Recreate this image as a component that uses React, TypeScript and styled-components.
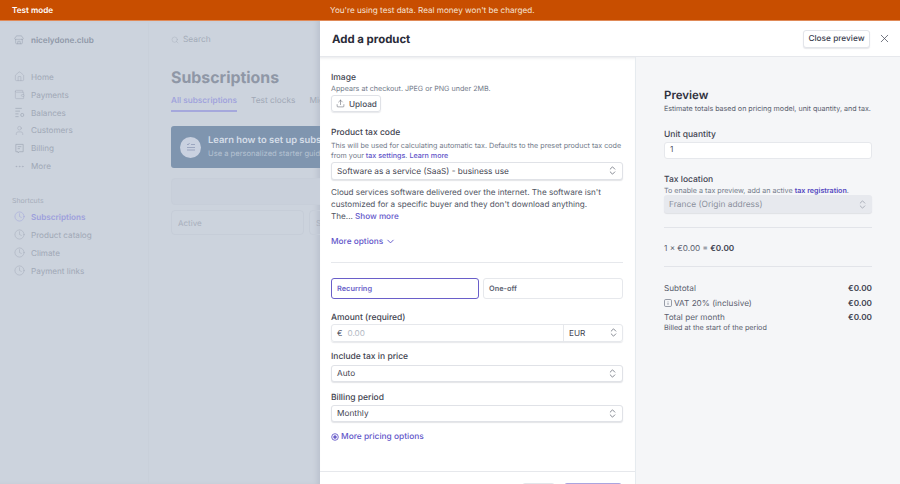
import React from "react";
import styled, { createGlobalStyle } from "styled-components";
import {
  ChevronDown,
  ChevronsUpDown,
  Clock,
  Ellipsis,
  Home,
  Search,
  Store,
  Upload,
  User,
  Wallet,
  X,
} from "lucide-react";

const Global = createGlobalStyle`
  html, body { margin: 0; padding: 0; height: 484px; overflow: hidden; }
  body { font-family: Inter, "Liberation Sans", sans-serif; background: #ccd3dd; color: #30313d; text-rendering: geometricPrecision; }
  #root { height: 484px; }
  * { box-sizing: border-box; }
`;

const Page = styled.div`
  display: flex;
  flex-direction: column;
  width: 900px;
  height: 484px;
  overflow: hidden;
`;

const TestBanner = styled.div`
  display: grid;
  grid-template-columns: 330px 1fr;
  align-items: center;
  height: 21px;
  flex: none;
  padding-left: 12px;
  background: #c84e00;
  border-bottom: 1px solid #e08a58;
  color: #f6e3d6;
  font-size: 8.15px;
`;

const BannerMode = styled.span`
  font-weight: 600;
  color: #fff;
`;

const BannerNote = styled.span`
  margin-left: -12px;
`;

const Body = styled.div`
  display: flex;
  flex: 1;
  min-height: 0;
`;

const Backdrop = styled.div`
  display: flex;
  width: 320px;
  flex: none;
  overflow: hidden;
  background: #ccd3dd;
  box-shadow: inset -5px 0 5px -2px #bcc3cf;
`;

const Sidebar = styled.nav`
  display: flex;
  flex-direction: column;
  width: 148px;
  flex: none;
  padding: 11px 0 0 12px;
`;

const Brand = styled.div`
  display: flex;
  align-items: center;
  gap: 7px;
  height: 15px;
  padding-left: 2px;
  margin-bottom: 21px;
  font-size: 8.15px;
  font-weight: 600;
  color: #8f98a8;
`;

const NavList = styled.div`
  display: flex;
  flex-direction: column;
`;

const NavItem = styled.div<{ $active?: boolean }>`
  display: flex;
  align-items: center;
  gap: 6px;
  height: 17.85px;
  padding-left: 2px;
  font-size: 8.15px;
  font-weight: ${(p) => (p.$active ? 600 : 400)};
  color: ${(p) => (p.$active ? "#9d9fdc" : "#a0a8b6")};
`;

const NavHeading = styled.div`
  margin: 20px 0 2px;
  height: 11px;
  line-height: 11px;
  font-size: 6.95px;
  color: #a6adba;
`;

const Main = styled.main`
  position: relative;
  flex: 1;
  min-width: 0;
  padding: 11px 0 0 22px;
  border-left: 1px solid #c9d0da;
  white-space: nowrap;
`;

const SearchRow = styled.div`
  display: flex;
  align-items: center;
  gap: 4px;
  height: 15px;
  margin-bottom: 19px;
  font-size: 8.4px;
  color: #a3abb8;
`;

const PageTitle = styled.h1`
  margin: 0;
  height: 24px;
  line-height: 24px;
  font-size: 15.9px;
  font-weight: 700;
  color: #8f97a6;
`;

const Tabs = styled.div`
  display: flex;
  gap: 14px;
  margin-top: 4px;
  font-size: 8.3px;
  color: #a0a8b6;
`;

const Tab = styled.div<{ $active?: boolean }>`
  height: 18px;
  line-height: 15px;
  font-weight: ${(p) => (p.$active ? 500 : 400)};
  color: ${(p) => (p.$active ? "#9d9fdc" : "#a0a8b6")};
  border-bottom: ${(p) => (p.$active ? "2px solid #a5a8dc" : "none")};
`;

const Callout = styled.div`
  display: flex;
  align-items: center;
  gap: 7px;
  width: 200px;
  height: 42px;
  margin-top: 14px;
  padding-left: 9px;
  background: #7f95af;
  border-radius: 3px;
`;

const CalloutIcon = styled.div`
  display: flex;
  align-items: center;
  justify-content: center;
  width: 21px;
  height: 21px;
  flex: none;
  border-radius: 50%;
  background: #c9d1e0;
  color: #8f9bb8;
`;

const CalloutTitle = styled.div`
  font-size: 9.4px;
  font-weight: 600;
  line-height: 14px;
  color: #d5dde8;
`;

const CalloutSub = styled.div`
  font-size: 7.6px;
  line-height: 12px;
  color: #b4c1d1;
`;

const EmptyBox = styled.div`
  width: 200px;
  height: 27px;
  margin-top: 10px;
  border: 1px solid #c7ced9;
  border-radius: 4px;
  background: #c9d0db;
`;

const StatRow = styled.div`
  display: flex;
  gap: 5px;
  margin-top: 5px;
`;

const StatCard = styled.div`
  display: flex;
  align-items: center;
  width: 133px;
  height: 25px;
  flex: none;
  padding-left: 6px;
  border: 1px solid #c6cdd8;
  border-radius: 4px;
  font-size: 8px;
  color: #a8afbc;
`;

const Modal = styled.section`
  display: flex;
  flex-direction: column;
  flex: 1;
  min-width: 0;
  background: #fff;
`;

const ModalHeader = styled.header`
  display: flex;
  align-items: center;
  justify-content: space-between;
  height: 36px;
  flex: none;
  padding: 0 9.5px 0 12px;
  border-bottom: 1px solid #e6e8ec;
  position: relative;
  z-index: 1;
`;

const ModalTitle = styled.h2`
  margin: 0;
  font-size: 11.4px;
  font-weight: 700;
  color: #2a2c38;
`;

const HeaderActions = styled.div`
  display: flex;
  align-items: center;
  gap: 7.5px;
  color: #4a4f5c;
`;

const CloseButton = styled.button`
  height: 18px;
  width: 67px;
  padding: 0;
  border: 1px solid #e3e5ea;
  border-radius: 3px;
  background: #fff;
  box-shadow: 0 1px 1px rgba(60, 66, 87, 0.12);
  font: 500 8.3px Inter, sans-serif;
  text-rendering: geometricPrecision;
  color: #3c4150;
`;

const Columns = styled.div`
  display: flex;
  flex: 1;
  min-height: 0;
`;

const FormColumn = styled.div`
  display: flex;
  flex-direction: column;
  width: 316px;
  flex: none;
  border-right: 1px solid #e6ebef;
`;

const FormScroll = styled.div`
  flex: 1;
  min-height: 0;
  padding: 15px 12px 0 11px;
  box-shadow: inset 0 3px 3px -2px rgba(60, 66, 87, 0.12);
`;

const Label = styled.div<{ $mt?: number }>`
  height: 12px;
  line-height: 12px;
  margin-top: ${(p) => p.$mt ?? 0}px;
  font-size: 8.5px;
  font-weight: 500;
  color: #3f4350;
`;

const Hint = styled.div<{ $mt?: number }>`
  margin-top: ${(p) => p.$mt ?? 0}px;
  font-size: 7.15px;
  line-height: 9.5px;
  color: #737b8a;
`;

const HintLink = styled.span`
  color: #5f55c9;
  font-weight: 500;
`;

const HintLinkStrong = styled(HintLink)`
  color: #5246c0;
  font-weight: 600;
`;

const UploadButton = styled.div`
  display: flex;
  align-items: center;
  gap: 4px;
  width: 50px;
  height: 17px;
  margin: 1.5px 0 15px;
  padding-left: 4px;
  border: 1px solid #e0e2e7;
  border-radius: 3px;
  box-shadow: 0 1px 1px rgba(60, 66, 87, 0.12);
  font-size: 8.2px;
  font-weight: 500;
  color: #4a4f5c;
`;

const SelectBox = styled.div<{ $mt?: number }>`
  display: flex;
  align-items: center;
  justify-content: space-between;
  height: 17.5px;
  margin-top: ${(p) => p.$mt ?? 2}px;
  padding: 0 4px 0 5px;
  border: 1px solid #e0e2e7;
  border-radius: 3px;
  box-shadow: 0 1px 1px rgba(60, 66, 87, 0.14);
  font-size: 8.25px;
  color: #3f4350;
  background: #fff;
`;

const Description = styled.p`
  margin: 6px 0 0;
  font-size: 8.15px;
  line-height: 12px;
  color: #4f5462;
`;

const ShowMore = styled.span`
  color: #5f55c9;
  font-weight: 500;
`;

const MoreOptions = styled.div`
  display: flex;
  align-items: center;
  gap: 2px;
  height: 12px;
  margin-top: 14px;
  font-size: 8.3px;
  font-weight: 500;
  color: #5f55c9;
`;

const Divider = styled.hr`
  height: 1px;
  margin: 14.5px 0 0;
  border: none;
  background: #e6e8ec;
`;

const PriceTabs = styled.div`
  display: grid;
  grid-template-columns: 148px 140px;
  gap: 4px;
  margin-top: 15px;
`;

const PriceTab = styled.div<{ $active?: boolean }>`
  display: flex;
  align-items: center;
  height: 21px;
  padding-left: 5px;
  border: ${(p) => (p.$active ? "1.5px solid #6a5fc9" : "1px solid #e6e8ec")};
  border-radius: 3px;
  font-size: 7.4px;
  font-weight: 600;
  color: ${(p) => (p.$active ? "#6a5fc9" : "#5c6270")};
`;

const AmountRow = styled.div`
  display: grid;
  grid-template-columns: 232px 1fr;
  height: 18px;
  border: 1px solid #e6e8ec;
  border-radius: 3px;
  box-shadow: 0 1px 1px rgba(60, 66, 87, 0.12);
`;

const AmountInput = styled.div`
  display: flex;
  align-items: center;
  gap: 5px;
  padding-left: 5px;
  border-right: 1px solid #e6e8ec;
  font-size: 8.2px;
  color: #4f5462;
`;

const Placeholder = styled.span`
  color: #b3b9c4;
`;

const CurrencySelect = styled.div`
  display: flex;
  align-items: center;
  justify-content: space-between;
  padding: 0 3px 0 5px;
  font-size: 8.2px;
  color: #3f4350;
`;

const PricingLink = styled.div`
  display: flex;
  align-items: center;
  gap: 2px;
  height: 12px;
  margin-top: 9px;
  font-size: 8.4px;
  font-weight: 500;
  color: #5f55c9;
`;

const Footer = styled.footer`
  display: flex;
  justify-content: flex-end;
  gap: 9px;
  height: 13px;
  flex: none;
  padding: 11px 13px 0 0;
  border-top: 1px solid #e6e8ec;
  overflow: hidden;
`;

const CancelStub = styled.div`
  width: 33px;
  height: 16px;
  border: 1px solid #e3e5ea;
  border-radius: 3px;
`;

const SaveStub = styled.div`
  width: 58px;
  height: 16px;
  border: 1px solid #aaa5df;
  border-radius: 3px;
  background: #b5b1e6;
`;

const PreviewColumn = styled.aside`
  flex: 1;
  min-width: 0;
  padding: 30px 28px 0 28px;
  background: #f5f6f8;
`;

const PreviewTitle = styled.h3`
  margin: 0;
  height: 16px;
  line-height: 16px;
  font-size: 11.5px;
  font-weight: 600;
  color: #30313d;
`;

const PreviewSub = styled.div`
  margin: 1px 0 15px;
  height: 10px;
  line-height: 10px;
  font-size: 7.13px;
  color: #5a606e;
  white-space: nowrap;
`;

const TextInput = styled.div`
  display: flex;
  align-items: center;
  height: 17px;
  margin-top: 0.5px;
  padding-left: 5px;
  border: 1px solid #e6e8ec;
  border-radius: 3px;
  background: #fff;
  font-size: 8.3px;
  color: #4f5462;
`;

const DisabledSelect = styled.div`
  display: flex;
  align-items: center;
  justify-content: space-between;
  height: 18px;
  padding: 1px 4px 0 5px;
  border-radius: 3px;
  background: #e7e9ee;
  box-shadow: 0 1px 1px rgba(60, 66, 87, 0.12);
  font-size: 8.4px;
  color: #8a909c;
`;

const PreviewDivider = styled.hr<{ $mt: number }>`
  height: 1px;
  margin: ${(p) => p.$mt}px 0 0;
  border: none;
  background: #e2e4e9;
`;

const Equation = styled.div`
  height: 12px;
  line-height: 12px;
  margin-top: 14px;
  font-size: 8.2px;
  color: #5a606e;
`;

const Strong = styled.strong`
  font-weight: 600;
  color: #3f4350;
`;

const Totals = styled.div`
  display: flex;
  flex-direction: column;
  margin-top: 14px;
`;

const TotalRow = styled.div`
  display: flex;
  align-items: center;
  justify-content: space-between;
  height: 14.6px;
  font-size: 8.2px;
  color: #5a606e;
`;

const TotalLabel = styled.span`
  display: flex;
  align-items: center;
  gap: 2px;
`;

const TotalValue = styled.span`
  font-weight: 600;
  color: #3f4350;
`;

const BilledNote = styled.div`
  margin-top: -1px;
  font-size: 7.2px;
  line-height: 8px;
  color: #5a606e;
`;

const BalancesIcon = () => (
  <svg width="11" height="11" viewBox="0 0 12 12" fill="none" stroke="currentColor" strokeWidth="0.8">
    <path d="M1.5 1.5h7M1.5 4.5h5M1.5 7.5h3.5M1.5 10.5h3.5" />
    <circle cx="9" cy="8.7" r="1.7" />
  </svg>
);

const BillingIcon = () => (
  <svg width="11" height="11" viewBox="0 0 12 12" fill="none" stroke="currentColor" strokeWidth="0.8">
    <path d="M2 1.5h8v8H6l-1.5 1.2V9.5H2z" />
    <path d="M4 4h4M4 6.2h2.5" />
  </svg>
);

const TaskIcon = () => (
  <svg width="12" height="12" viewBox="0 0 12 12" fill="none" stroke="currentColor" strokeWidth="0.8">
    <path d="M2 3l1 1 1.5-2M6 3.5h4M2 6.5h8M2 9h8" />
  </svg>
);

const InfoBoxIcon = () => (
  <svg width="8" height="8" viewBox="0 0 8 8" fill="none" stroke="#6f7684" strokeWidth="0.7">
    <rect x="0.5" y="0.5" width="7" height="7" rx="1.2" />
    <path d="M4 2.2v.5M4 3.6v2.2" />
  </svg>
);

const TargetIcon = () => (
  <svg width="8" height="8" viewBox="0 0 8 8" fill="none" stroke="#6a5fc9">
    <circle cx="4" cy="4" r="3.3" strokeWidth="0.9" />
    <circle cx="4" cy="4" r="1.5" fill="#6a5fc9" strokeWidth="0.5" />
  </svg>
);

const Chevrons = () => <ChevronsUpDown size={11} strokeWidth={1.5} color="#4f5462" />;

const navIcon = { size: 11, strokeWidth: 1 };

export default function App() {
  return (
    <Page>
      <Global />
      <TestBanner>
        <BannerMode>Test mode</BannerMode>
        <BannerNote>You're using test data. Real money won't be charged.</BannerNote>
      </TestBanner>
      <Body>
        <Backdrop>
          <Sidebar>
            <Brand>
              <Store size={10} strokeWidth={1.1} />
              nicelydone.club
            </Brand>
            <NavList>
              <NavItem><Home {...navIcon} />Home</NavItem>
              <NavItem><Wallet {...navIcon} />Payments</NavItem>
              <NavItem><BalancesIcon />Balances</NavItem>
              <NavItem><User {...navIcon} />Customers</NavItem>
              <NavItem><BillingIcon />Billing</NavItem>
              <NavItem><Ellipsis {...navIcon} />More</NavItem>
            </NavList>
            <NavHeading>Shortcuts</NavHeading>
            <NavList>
              <NavItem $active><Clock {...navIcon} />Subscriptions</NavItem>
              <NavItem><Clock {...navIcon} />Product catalog</NavItem>
              <NavItem><Clock {...navIcon} />Climate</NavItem>
              <NavItem><Clock {...navIcon} />Payment links</NavItem>
            </NavList>
          </Sidebar>
          <Main>
            <SearchRow>
              <Search size={8} strokeWidth={1.2} />
              Search
            </SearchRow>
            <PageTitle>Subscriptions</PageTitle>
            <Tabs>
              <Tab $active>All subscriptions</Tab>
              <Tab>Test clocks</Tab>
              <Tab>Migrations</Tab>
            </Tabs>
            <Callout>
              <CalloutIcon><TaskIcon /></CalloutIcon>
              <div>
                <CalloutTitle>Learn how to set up subscriptions</CalloutTitle>
                <CalloutSub>Use a personalized starter guide</CalloutSub>
              </div>
            </Callout>
            <EmptyBox />
            <StatRow>
              <StatCard>Active</StatCard>
              <StatCard>Scheduled</StatCard>
            </StatRow>
          </Main>
        </Backdrop>
        <Modal>
          <ModalHeader>
            <ModalTitle>Add a product</ModalTitle>
            <HeaderActions>
              <CloseButton>Close preview</CloseButton>
              <X size={13} strokeWidth={1.4} />
            </HeaderActions>
          </ModalHeader>
          <Columns>
            <FormColumn>
              <FormScroll>
                <Label>Image</Label>
                <Hint>Appears at checkout. JPEG or PNG under 2MB.</Hint>
                <UploadButton>
                  <Upload size={9} strokeWidth={1.3} />
                  Upload
                </UploadButton>
                <Label>Product tax code</Label>
                <Hint $mt={2}>
                  This will be used for calculating automatic tax. Defaults to the preset product tax code
                  <br />
                  from your <HintLink>tax settings</HintLink>. <HintLink>Learn more</HintLink>
                </Hint>
                <SelectBox $mt={2}>
                  Software as a service (SaaS) - business use
                  <Chevrons />
                </SelectBox>
                <Description>
                  Cloud services software delivered over the internet. The software isn't
                  <br />
                  customized for a specific buyer and they don't download anything.
                  <br />
                  The... <ShowMore>Show more</ShowMore>
                </Description>
                <MoreOptions>
                  More options
                  <ChevronDown size={11} strokeWidth={2} />
                </MoreOptions>
                <Divider />
                <PriceTabs>
                  <PriceTab $active>Recurring</PriceTab>
                  <PriceTab>One-off</PriceTab>
                </PriceTabs>
                <Label $mt={12.5}>Amount (required)</Label>
                <AmountRow>
                  <AmountInput>
                    €<Placeholder>0.00</Placeholder>
                  </AmountInput>
                  <CurrencySelect>
                    EUR
                    <Chevrons />
                  </CurrencySelect>
                </AmountRow>
                <Label $mt={9.5}>Include tax in price</Label>
                <SelectBox $mt={1.5}>
                  Auto
                  <Chevrons />
                </SelectBox>
                <Label $mt={10}>Billing period</Label>
                <SelectBox $mt={0.5}>
                  Monthly
                  <Chevrons />
                </SelectBox>
                <PricingLink>
                  <TargetIcon />
                  More pricing options
                </PricingLink>
              </FormScroll>
              <Footer>
                <CancelStub />
                <SaveStub />
              </Footer>
            </FormColumn>
            <PreviewColumn>
              <PreviewTitle>Preview</PreviewTitle>
              <PreviewSub>Estimate totals based on pricing model, unit quantity, and tax.</PreviewSub>
              <Label>Unit quantity</Label>
              <TextInput>1</TextInput>
              <Label $mt={15}>Tax location</Label>
              <Hint>
                To enable a tax preview, add an active <HintLinkStrong>tax registration</HintLinkStrong>.
              </Hint>
              <DisabledSelect>
                France (Origin address)
                <ChevronsUpDown size={11} strokeWidth={1.4} color="#8a909c" />
              </DisabledSelect>
              <PreviewDivider $mt={14} />
              <Equation>
                1 × €0.00 = <Strong>€0.00</Strong>
              </Equation>
              <PreviewDivider $mt={12} />
              <Totals>
                <TotalRow>
                  <span>Subtotal</span>
                  <TotalValue>€0.00</TotalValue>
                </TotalRow>
                <TotalRow>
                  <TotalLabel><InfoBoxIcon />VAT 20% (inclusive)</TotalLabel>
                  <TotalValue>€0.00</TotalValue>
                </TotalRow>
                <TotalRow>
                  <span>Total per month</span>
                  <TotalValue>€0.00</TotalValue>
                </TotalRow>
                <BilledNote>Billed at the start of the period</BilledNote>
              </Totals>
            </PreviewColumn>
          </Columns>
        </Modal>
      </Body>
    </Page>
  );
}
